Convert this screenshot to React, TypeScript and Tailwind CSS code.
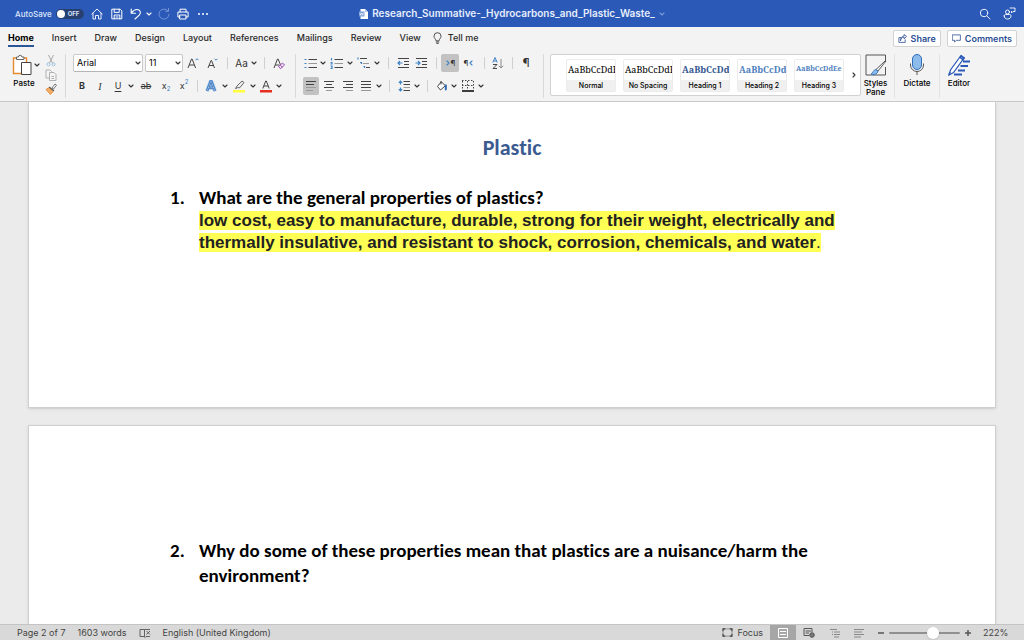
import type { ReactNode } from "react";

const stroke = { fill: "none", stroke: "currentColor", strokeLinecap: "round", strokeLinejoin: "round" } as const;

function Chevron({ className = "" }: { className?: string }) {
  return (
    <svg viewBox="0 0 6 6" className={`h-[6px] w-[6px] shrink-0 ${className}`} {...stroke} strokeWidth={1.1}>
      <path d="M1 2l2 2 2-2" />
    </svg>
  );
}

function Tool({ label, className = "", children }: { label: string; className?: string; children: ReactNode }) {
  return (
    <button type="button" aria-label={label} className={`flex h-[18px] shrink-0 items-center justify-center rounded-[2px] ${className}`}>
      {children}
    </button>
  );
}

function More({ label }: { label: string }) {
  return (
    <Tool label={label} className="w-2">
      <Chevron />
    </Tool>
  );
}

function Rule({ className }: { className: string }) {
  return (
    <span className={`flex shrink-0 justify-center ${className}`}>
      <span className="h-3 w-px bg-[#d0d0d0]" />
    </span>
  );
}

function Divider() {
  return <span className="h-11 w-px shrink-0 bg-[#d9d9d9]" />;
}

function Lines({ d, soft, blue, w = 14 }: { d: string; soft?: string; blue?: string; w?: number }) {
  return (
    <svg viewBox={`0 0 ${w} 12`} style={{ width: w }} className="h-3" fill="none" strokeWidth={1}>
      <path d={d} stroke="#444" />
      {soft && <path d={soft} stroke="#999" />}
      {blue && <path d={blue} stroke="#3f83c6" strokeWidth={1.2} />}
    </svg>
  );
}

function PickList({ label, value, className }: { label: string; value: string; className: string }) {
  return (
    <label className={`relative block h-[18px] shrink-0 ${className}`}>
      <span className="sr-only">{label}</span>
      <select className="block h-full w-full appearance-none rounded-[2px] border border-[#c9c9c9] border-b-[#b5b5b5] bg-white pl-[3px] text-[9px] text-black">
        <option>{value}</option>
      </select>
      <Chevron className="pointer-events-none absolute top-[6px] right-[2px]" />
    </label>
  );
}

const tabs = ["Home", "Insert", "Draw", "Design", "Layout", "References", "Mailings", "Review", "View"];

const styles = [
  { name: "Normal", look: "text-[9px] text-black" },
  { name: "No Spacing", look: "text-[9px] text-black" },
  { name: "Heading 1", look: "text-[9px] font-bold text-[#34588f]" },
  { name: "Heading 2", look: "text-[9px] font-bold text-[#4f81bd]" },
  { name: "Heading 3", look: "text-[7px] font-bold text-[#4f81bd]" },
];

function TitleBar() {
  return (
    <header className="grid h-[27px] shrink-0 grid-cols-[1fr_auto_1fr] items-center bg-[#2b59b8] text-white">
      <div className="flex items-center pl-[15px]">
        <label className="flex items-center gap-1 text-[8px] font-medium text-[#dce6fa]">
          AutoSave
          <input type="checkbox" role="switch" className="peer sr-only" />
          <span className="flex h-[10px] w-7 items-center gap-[3px] rounded-full bg-[#27406f] pl-px">
            <span className="h-2 w-2 rounded-full bg-white" />
            <span className="text-[6px] font-bold">OFF</span>
          </span>
        </label>
        <Tool label="Home" className="ml-[6px] w-[14px]">
          <svg viewBox="0 0 12 12" className="h-3 w-3" {...stroke} strokeWidth={0.9}>
            <path d="M.8 6L6 1l5.2 5M2 5.2V11h2.500V7.500h3V11H10V5.2" />
          </svg>
        </Tool>
        <Tool label="Save" className="ml-[6px] w-[14px]">
          <svg viewBox="0 0 12 12" className="h-3 w-3" {...stroke} strokeWidth={1}>
            <path d="M1.200 1.200h8l1.600 1.600v8H1.200zM3.200 1.200v3.200h5V1.200M3.200 10.800V7h5.600v3.800M5 9h2" />
          </svg>
        </Tool>
        <Tool label="Undo" className="ml-[5px] w-[14px]">
          <svg viewBox="0 0 12 12" className="h-3 w-3" {...stroke} strokeWidth={1.1}>
            <path d="M1.200 1v4.200h4.300M1.400 5C3.400 2.300 6 1 8.400 1.800c2.400.9 2.500 3.700.8 5.300L5 11" />
          </svg>
        </Tool>
        <Tool label="Undo history" className="ml-[2px] w-2">
          <Chevron />
        </Tool>
        <Tool label="Redo" className="ml-1 w-[14px] text-[#7d9bd8]">
          <svg viewBox="0 0 12 12" className="h-3 w-3" {...stroke} strokeWidth={0.9}>
            <path d="M9.500 2.500A5 5 0 1 0 11 6.500M10.500.5v2.800H7.700" />
          </svg>
        </Tool>
        <Tool label="Print" className="ml-[5px] w-[14px]">
          <svg viewBox="0 0 12 12" className="h-3 w-3" {...stroke} strokeWidth={1}>
            <path d="M3 4V1.200h6V4M3 9H.9V4h10.200v5H9M3 7h6v4H3z" />
          </svg>
        </Tool>
        <Tool label="More commands" className="ml-[6px] w-[14px]">
          <svg viewBox="0 0 12 4" className="h-1 w-3" fill="currentColor">
            <circle cx="2" cy="2" r="1" />
            <circle cx="6" cy="2" r="1" />
            <circle cx="10" cy="2" r="1" />
          </svg>
        </Tool>
      </div>
      <div className="flex items-center gap-1">
        <svg viewBox="0 0 9 10" className="h-[10px] w-[9px]">
          <path d="M1.500 0H6l3 3v7H1.500z" fill="#fff" />
          <path d="M6 0v3h3" fill="#b9caea" />
          <path d="M0 2.500h5.500v5H0z" fill="#7f9fda" />
          <path d="M1 3.800l.7 2.500 1-2.300 1 2.300.8-2.500M6.500 5H8M6.500 6.500H8" fill="none" stroke="#fff" strokeWidth=".6" />
        </svg>
        <h1 className="text-[10px] font-semibold text-[#e6edfb]">Research_Summative-_Hydrocarbons_and_Plastic_Waste_</h1>
        <Chevron className="text-[#7d9bd8]" />
      </div>
      <div className="flex items-center justify-end gap-[10px] pr-2">
        <Tool label="Search" className="w-[14px]">
          <svg viewBox="0 0 12 12" className="h-3 w-3" {...stroke} strokeWidth={0.9}>
            <circle cx="5" cy="5" r="3.700" />
            <path d="M7.800 7.800L11 11" />
          </svg>
        </Tool>
        <Tool label="Account" className="w-[14px]">
          <svg viewBox="0 0 13 13" className="h-[13px] w-[13px]" {...stroke} strokeWidth={0.9}>
            <circle cx="4.500" cy="5" r="2" />
            <path d="M1.200 9c0-1 .8-1.500 1.800-1.500h3.500c1 0 1.500.6 1.500 1.500 0 2-1.500 3-3.400 3S1.200 11 1.200 9zM7 1h5v3.500h-2L8.500 6V4.500" />
          </svg>
        </Tool>
      </div>
    </header>
  );
}

function TabRow() {
  return (
    <div className="flex h-[21px] shrink-0 items-center justify-between pr-[7px] pl-2">
      <nav className="flex h-full items-center gap-[18px] text-[9px] font-medium text-[#2a2a2a]">
        {tabs.map((t) => (
          <a key={t} href={`#${t.toLowerCase()}`} className={t === "Home" ? "flex h-[19px] items-center border-b-2 border-[#2b579a] pt-[2px] font-bold text-black" : ""}>
            {t}
          </a>
        ))}
        <button type="button" className="-ml-[6px] flex items-center gap-[6px]">
          <svg viewBox="0 0 9 12" className="h-3 w-[9px]" {...stroke} strokeWidth={0.8}>
            <path d="M3 8.500C3 7 1 6.500 1 4.200a3.500 3.500 0 0 1 7 0C8 6.500 6 7 6 8.500zM3.200 10h2.600M3.700 11.400h1.600" />
          </svg>
          Tell me
        </button>
      </nav>
      <div className="flex gap-[6px] pt-[2px] text-[9px] font-semibold text-[#2b4f94]">
        <button type="button" className="flex h-[17px] items-center gap-1 rounded-[2px] border border-[#d2d2d2] bg-white px-1">
          <svg viewBox="0 0 10 10" className="h-[9px] w-[9px]" {...stroke} strokeWidth={0.9}>
            <path d="M3 4H1v5.300h7V6.500M2.800 7c.3-2.300 1.700-3.500 4-3.500V5.300L9.500 2.700 6.800.6v1.600C4.500 2.300 2.900 4 2.800 7z" />
          </svg>
          Share
        </button>
        <button type="button" className="flex h-[17px] items-center gap-1 rounded-[2px] border border-[#d2d2d2] bg-white px-1">
          <svg viewBox="0 0 10 10" className="h-[9px] w-[9px]" {...stroke} strokeWidth={0.9}>
            <path d="M.7 1h8.600v6H4.800L2.800 9V7H.7z" />
          </svg>
          Comments
        </button>
      </div>
    </div>
  );
}

function FontGroup() {
  return (
    <div className="flex shrink-0 flex-col gap-[5px]">
      <div className="flex items-center">
        <PickList label="Font" value="Arial" className="mr-[2px] w-[70px]" />
        <PickList label="Font size" value="11" className="w-[38px]" />
        <Tool label="Grow font" className="w-5">
          <svg viewBox="0 0 12 12" className="h-3 w-3" fill="none" stroke="#444">
            <path d="M1 11L4.500 2h.6l3.500 9M2.300 8h5" />
            <path d="M8.500 3.200L10 1.700l1.500 1.500" stroke="#3f83c6" />
          </svg>
        </Tool>
        <Tool label="Shrink font" className="w-[18px]">
          <svg viewBox="0 0 12 12" className="h-3 w-3" fill="none" stroke="#444">
            <path d="M2 11l3-7.500h.5l3 7.500M3 8.500h4.500" />
            <path d="M8.500 1.700L10 3.200l1.500-1.500" stroke="#3f83c6" />
          </svg>
        </Tool>
        <Rule className="w-3" />
        <Tool label="Change case" className="w-[17px] text-[10px]">Aa</Tool>
        <More label="Case options" />
        <Rule className="w-3" />
        <Tool label="Clear formatting" className="w-[18px]">
          <svg viewBox="0 0 14 13" className="h-[13px] w-[14px]" fill="none" stroke="#444">
            <path d="M2 11L5.500 2h.6l2.500 6M3.300 8h4" />
            <path d="M6.500 9.500l4-3.500 2 2-4 3.700z" stroke="#9b4fb0" fill="#f3e3f7" />
            <path d="M8.200 8l2.200 2.200" stroke="#9b4fb0" />
          </svg>
        </Tool>
      </div>
      <div className="flex items-center text-[9px]">
        <Tool label="Bold" className="w-[18px] font-bold">B</Tool>
        <Tool label="Italic" className="w-[18px] font-['Liberation_Serif',serif] text-[10px] italic">I</Tool>
        <Tool label="Underline" className="w-[18px] underline underline-offset-2">U</Tool>
        <More label="Underline options" />
        <Tool label="Strikethrough" className="w-[22px] line-through">ab</Tool>
        <Tool label="Subscript" className="w-[18px]">
          x<sub className="bottom-[-3px] text-[6px] text-[#3f83c6]">2</sub>
        </Tool>
        <Tool label="Superscript" className="w-[18px]">
          x<sup className="top-[-4px] text-[6px] text-[#3f83c6]">2</sup>
        </Tool>
        <Rule className="w-2" />
        <Tool label="Text effects" className="w-5">
          <svg viewBox="0 0 12 12" className="h-3 w-3" fill="none">
            <path d="M2 11L5.600 1.500h.8L10 11M3.500 7.800h5" stroke="#8dbbea" strokeWidth="3.600" />
            <path d="M2 11L5.600 1.500h.8L10 11M3.500 7.800h5" stroke="#1f5fae" strokeWidth="2" />
            <path d="M2 11L5.600 1.500h.8L10 11M3.500 7.800h5" stroke="#e8f2fc" strokeWidth=".6" />
          </svg>
        </Tool>
        <More label="Effect options" />
        <Tool label="Highlight" className="w-5">
          <svg viewBox="0 0 12 13" className="h-[13px] w-3">
            <path d="M4 6L9 1l2 1.500-4.200 5.200H4.500L2.500 8.600z" fill="#eee" stroke="#555" strokeWidth=".9" />
            <path d="M0 10h12v2.500H0z" fill="#ffff3c" />
          </svg>
        </Tool>
        <More label="Highlight colours" />
        <Tool label="Font colour" className="w-[18px]">
          <svg viewBox="0 0 12 13" className="h-[13px] w-3">
            <path d="M2.800 8.500L5.700 1h.6l2.900 7.500M3.800 6h4.400" fill="none" stroke="#444" />
            <path d="M0 10h12v2.500H0z" fill="#e5301f" />
          </svg>
        </Tool>
        <More label="Font colours" />
      </div>
    </div>
  );
}

function ParagraphGroup() {
  return (
    <div className="flex shrink-0 flex-col gap-[5px]">
      <div className="flex items-center">
        <Tool label="Bullets" className="w-4">
          <Lines d="M4.500 2.500H13M4.500 10.500H13" soft="M4.500 6.500H13" blue="M.5 2.500h2M.5 6.500h2M.5 10.500h2" />
        </Tool>
        <More label="Bullet styles" />
        <Tool label="Numbering" className="w-[19px]">
          <Lines d="M4.500 2.500H13M4.500 10.500H13" soft="M4.500 6.500H13" blue="M1.500 1v2.500M.5 5.500h1.500v1.500H.5M.5 9h1.500v2.500H.5" />
        </Tool>
        <More label="Number styles" />
        <Tool label="Multilevel list" className="w-[19px]">
          <Lines d="M3 1.500H10M9 10.500H13" soft="M6 6.500H12" blue="M1 .5v2M3 5.500h1.500v1.500M6.500 9.500h1v1.500" />
        </Tool>
        <More label="List styles" />
        <Rule className="w-[14px]" />
        <Tool label="Decrease indent" className="w-4">
          <Lines w={12} d="M1 1.500H12M7 4.500H12M7 7.500H12M1 10.500H12" blue="M5.500 6H1M3 4L1 6l2 2" />
        </Tool>
        <Tool label="Increase indent" className="w-5">
          <Lines w={12} d="M1 1.500H12M7 4.500H12M7 7.500H12M1 10.500H12" blue="M.5 6H5M3 4l2 2-2 2" />
        </Tool>
        <Rule className="w-[10px]" />
        <Tool label="Left to right" className="w-[18px] bg-[#c2c2c2] text-[8px]">
          <Chevron className="-rotate-90 text-[#3f83c6]" />¶
        </Tool>
        <Tool label="Right to left" className="w-5 text-[8px]">
          ¶<Chevron className="rotate-90 text-[#3f83c6]" />
        </Tool>
        <Rule className="w-[10px]" />
        <Tool label="Sort" className="w-[18px]">
          <svg viewBox="0 0 12 12" className="h-3 w-3" fill="none" stroke="#444">
            <path d="M.8 5.500L3 .5l2.200 5M1.500 4h3" stroke="#3f83c6" />
            <path d="M1 7.500h4L1 11.500h4" />
            <path d="M9 2v9M6.800 8.800L9 11l2.200-2.200" stroke="#888" />
          </svg>
        </Tool>
        <Rule className="w-[10px]" />
        <Tool label="Show marks" className="w-[18px] text-[12px]">¶</Tool>
      </div>
      <div className="flex items-center">
        <Tool label="Align left" className="w-4 bg-[#c2c2c2]">
          <Lines w={12} d="M1 1.500H11M1 4.500H9" soft="M1 7.500H11M1 10.500H8" />
        </Tool>
        <Tool label="Centre" className="w-5">
          <Lines w={12} d="M1 1.500H11M3 4.500H9M1 7.500H11" soft="M3 10.500H9" />
        </Tool>
        <Tool label="Align right" className="w-[18px]">
          <Lines w={12} d="M1 1.500H11M4 4.500H11M1 7.500H11" soft="M4 10.500H11" />
        </Tool>
        <Tool label="Justify" className="w-[18px]">
          <Lines w={12} d="M1 1.500H11M1 4.500H11M1 7.500H11" soft="M1 10.500H11" />
        </Tool>
        <More label="Justify options" />
        <Rule className="w-3" />
        <Tool label="Line spacing" className="w-[18px]">
          <Lines w={13} d="M5.500 1.500H12M5.500 4.500H12M5.500 10.500H12" soft="M5.500 7.500H12" blue="M2.500 1v3.500M2.500 7.500V11M.8 2.800L2.500 1l1.700 1.800M.8 9.200L2.500 11l1.700-1.800" />
        </Tool>
        <More label="Spacing options" />
        <Rule className="w-3" />
        <Tool label="Shading" className="w-[17px]">
          <svg viewBox="0 0 12 12" className="h-3 w-3" {...stroke}>
            <path d="M5 2L1.500 6.500l3 3.500L9 6z" stroke="#444" fill="#fff" />
            <path d="M5 4V1.500M10 5v4" stroke="#444" />
            <path d="M9.700 5.500v4" stroke="#2f6fc0" strokeWidth="1.800" />
          </svg>
        </Tool>
        <More label="Shading colours" />
        <Tool label="Borders" className="w-[19px]">
          <svg viewBox="0 0 12 12" className="h-3 w-3" fill="none" stroke="#444">
            <path d="M0 .5h12M0 5.500h12M.5 1v9M5.500 1v9M11.500 1v9" strokeDasharray="1.500 1.500" />
            <path d="M0 11h12" stroke="#000" strokeWidth="1.500" />
          </svg>
        </Tool>
        <More label="Border styles" />
      </div>
    </div>
  );
}

function StyleGallery() {
  return (
    <div className="flex h-[42px] min-w-0 shrink-0 items-center rounded-[2px] border border-[#d2d2d2] bg-white pl-[15px]">
      <div className="flex gap-[7px]">
        {styles.map((s) => (
          <button key={s.name} type="button" className="flex h-[33px] w-[50px] flex-col rounded-[2px] border border-[#ececec] bg-white">
            <span className={`flex w-full flex-1 items-center overflow-hidden pl-px font-['Noto_Serif','DejaVu_Serif','Liberation_Serif',serif] whitespace-nowrap ${s.look}`}>AaBbCcDdEe</span>
            <span className="w-full bg-[#f0f0f0] text-center text-[7px] leading-[11px] font-medium text-black">{s.name}</span>
          </button>
        ))}
      </div>
      <Tool label="More styles" className="ml-1 w-3">
        <Chevron className="-rotate-90" />
      </Tool>
    </div>
  );
}

function BigTool({ icon, children, className }: { icon: ReactNode; children: ReactNode; className: string }) {
  return (
    <button type="button" className={`flex h-11 shrink-0 flex-col items-center gap-[3px] text-center text-[8px] leading-[9px] font-medium text-black ${className}`}>
      {icon}
      <span>{children}</span>
    </button>
  );
}

function Ribbon() {
  return (
    <div className="flex h-[54px] shrink-0 items-start border-b border-[#c8c8c8] pt-[6px] text-[#333]">
      <div className="flex w-[65px] shrink-0 pl-2">
        <BigTool
          className="w-8"
          icon={
            <svg viewBox="0 0 22 22" className="mr-1 h-[22px] w-[22px]" fill="none">
              <path d="M2.500 4h13v15.500h-13z" fill="#fff" stroke="#e58a2e" strokeWidth="1.400" />
              <path d="M5.500 5.500V3h2a1.700 1.700 0 0 1 3.400 0h2v2.500z" fill="#fff" stroke="#666" />
              <path d="M10.500 8.500h9.500v12h-9.500z" fill="#fff" stroke="#444" />
            </svg>
          }
        >
          Paste
        </BigTool>
        <div className="-ml-[7px] pt-[2px]">
          <More label="Paste options" />
        </div>
        <div className="ml-1 flex flex-col gap-[2px]">
          <button type="button" aria-label="Cut">
            <svg viewBox="0 0 12 13" className="h-[13px] w-3" fill="none">
              <path d="M3.500 1l4 8M8.500 1l-4 8" stroke="#a8a8a8" />
              <circle cx="3.500" cy="10.300" r="1.500" stroke="#9bbfe0" />
              <circle cx="8.500" cy="10.300" r="1.500" stroke="#9bbfe0" />
            </svg>
          </button>
          <button type="button" aria-label="Copy">
            <svg viewBox="0 0 12 12" className="h-3 w-3" fill="#f5f5f5" stroke="#b0b0b0">
              <path d="M1 1h4l1.500 1.500V9H1z" />
              <path d="M4.500 3.500H9l2 2v6H4.500zM6.500 7.500H9M6.500 9.500H9" />
            </svg>
          </button>
          <button type="button" aria-label="Format painter">
            <svg viewBox="0 0 12 12" className="h-3 w-3">
              <path d="M7 5l3-4 1.500 1.200L8.500 6z" fill="#fff" stroke="#555" strokeWidth=".8" />
              <path d="M4 4l5 4" stroke="#555" strokeWidth="1.400" />
              <path d="M3.500 5L1 6.500l4.500 5L8 8.500z" fill="#f6b26b" stroke="#e07b20" strokeWidth=".8" />
            </svg>
          </button>
        </div>
      </div>
      <Divider />
      <div className="w-[229px] shrink-0 pl-[7px]">
        <FontGroup />
      </div>
      <Divider />
      <div className="w-[247px] shrink-0 pl-[7px]">
        <ParagraphGroup />
      </div>
      <Divider />
      <div className="flex min-w-0 pl-[6px]">
        <StyleGallery />
        <BigTool
          className="w-[29px]"
          icon={
            <svg viewBox="0 0 22 22" className="h-[22px] w-[22px]" fill="none">
              <path d="M20.500 8V1H1v20h19.500v-8" stroke="#555" />
              <path d="M21 7L13 17l-2-1.500L20 7z" fill="#fff" stroke="#444" strokeWidth=".9" />
              <path d="M11 15.500c-3 .3-2.500 3.500-5 4.500 2 1 6.500.8 7-3z" fill="#8dbbea" stroke="#2f6fc0" strokeWidth=".9" />
            </svg>
          }
        >
          Styles Pane
        </BigTool>
        <span className="ml-1 h-11 w-px bg-[#e2e2e2]" />
        <BigTool
          className="w-11"
          icon={
            <svg viewBox="0 0 16 22" className="h-[22px] w-4" fill="none">
              <rect x="3.500" y=".5" width="9" height="15" rx="4.500" fill="#8dbbea" stroke="#2f6fc0" />
              <path d="M1.500 9.500v1.500a6.500 6.500 0 0 0 13 0V9.500M8 17.500V21" stroke="#555" />
            </svg>
          }
        >
          Dictate
        </BigTool>
        <span className="h-11 w-px bg-[#e2e2e2]" />
        <BigTool
          className="w-[38px]"
          icon={
            <svg viewBox="0 0 22 22" className="h-[22px] w-[22px]" fill="none">
              <path d="M15 7.500h7M12.500 12h7.500M10 16.500h7M6 20.500h8" stroke="#2b59b8" strokeWidth="2.200" />
              <path d="M1 21l1.500-5L13 1.500l3.200 2.300L5.500 18.500z" fill="#fff" stroke="#2b59b8" strokeWidth="1.200" />
              <path d="M12 3.500l3 2.200 1-1.600-2.600-2zM1 21l1-3" stroke="#2b59b8" strokeWidth="1.500" />
            </svg>
          }
        >
          Editor
        </BigTool>
      </div>
    </div>
  );
}

function Document() {
  return (
    <main className="min-h-0 flex-1 overflow-hidden bg-[#ebebeb] px-7 font-['Carlito','Lato',sans-serif] text-[19px] leading-[25px] font-bold text-black [font-variant-ligatures:none]">
      <article className="border-x border-b border-[#cfcfcf] bg-white px-[141px] pt-8 pb-[153px] shadow-sm">
        <h2 className="text-center text-[22px] leading-[28px] text-[#3b5b91]">Plastic</h2>
        <ol className="pt-[23px]">
          <li className="flex">
            <span className="w-[29px] shrink-0">1.</span>
            <div className="whitespace-nowrap">
              <p>What are the general properties of plastics?</p>
              <p className="font-['Liberation_Sans',sans-serif] text-[17px] leading-[22px] text-[#222]">
                <mark className="bg-[#ffff54] text-inherit">
                  low cost, easy to manufacture, durable, strong for their weight, electrically and
                  <br />
                  thermally insulative, and resistant to shock, corrosion, chemicals, and water<span className="font-normal">.</span>
                </mark>
              </p>
            </div>
          </li>
        </ol>
      </article>
      <article className="mt-[17px] border border-[#cfcfcf] bg-white px-[141px] pt-28 pb-28 shadow-sm">
        <ol start={2}>
          <li className="flex">
            <span className="w-[29px] shrink-0">2.</span>
            <p>
              Why do some of these properties mean that plastics are a nuisance/harm the
              <br />
              environment?
            </p>
          </li>
        </ol>
      </article>
    </main>
  );
}

function StatusBar() {
  return (
    <footer className="flex h-4 shrink-0 items-center justify-between border-t border-[#c4c4c4] bg-[#d9d9d9] pr-[17px] pl-[17px] text-[9px] leading-[15px] text-[#444]">
      <div className="flex items-center gap-3">
        <span>Page 2 of 7</span>
        <span>1603 words</span>
        <button type="button" aria-label="Proofing">
          <svg viewBox="0 0 12 10" className="h-[10px] w-3" fill="none" stroke="#555" strokeWidth=".9">
            <path d="M5.500 1.500H1v7h4.500zM5.500 1.500H7M5.500 8.500L6 9.500 7 8.500M7.500 3l3.500 3.500M11 3L7.500 6.500M7 1.500h4M7 8.500h4" />
          </svg>
        </button>
        <button type="button">English (United Kingdom)</button>
      </div>
      <div className="flex h-full items-center">
        <button type="button" className="mr-[7px] flex items-center gap-1">
          <svg viewBox="0 0 12 10" className="h-[9px] w-[11px]" fill="none" stroke="#444">
            <path d="M1 3.500V1h2.500M8.500 1H11v2.500M11 6.500V9H8.500M3.500 9H1V6.500" strokeWidth="1.200" />
            <path d="M1 1h10v8H1z" strokeWidth=".5" />
          </svg>
          Focus
        </button>
        <button type="button" aria-label="Print layout" className="flex h-full w-[26px] items-center justify-center bg-[#a6a6a6]">
          <svg viewBox="0 0 10 10" className="h-[10px] w-[10px]" fill="none" stroke="#fff">
            <path d="M.5.5h9v9h-9zM2 3.500h6M2 6.500h6" />
          </svg>
        </button>
        <button type="button" aria-label="Web layout" className="flex w-[26px] justify-center">
          <svg viewBox="0 0 12 10" className="h-[10px] w-3" fill="none" stroke="#555">
            <path d="M6 7.500H1v-7h8V4M2.500 3H8M2.500 5H6" />
            <circle cx="9" cy="7" r="2.300" fill="#777" />
          </svg>
        </button>
        <button type="button" aria-label="Outline" className="flex w-[26px] justify-center">
          <svg viewBox="0 0 12 10" className="h-[10px] w-3" fill="none" stroke="#888">
            <path d="M1 1.500h7M3 4h1M5 4h6M3 6.500h1M5 6.500h6M5 9h5" />
          </svg>
        </button>
        <button type="button" aria-label="Draft" className="flex w-[22px] justify-center">
          <svg viewBox="0 0 12 10" className="h-[10px] w-3" fill="none" stroke="#888">
            <path d="M1 1.500h10M1 4h8M1 6.500h10M1 9h7" />
          </svg>
        </button>
        <button type="button" aria-label="Zoom out" className="ml-[7px] flex">
          <svg viewBox="0 0 8 8" className="h-2 w-2" stroke="#555" strokeWidth="1.500">
            <path d="M1 4h6" />
          </svg>
        </button>
        <input
          type="range"
          aria-label="Zoom"
          min={10}
          max={500}
          defaultValue={325}
          className="mx-1 h-3 w-[71px] appearance-none bg-transparent [&::-webkit-slider-runnable-track]:h-[2px] [&::-webkit-slider-runnable-track]:rounded-full [&::-webkit-slider-runnable-track]:bg-[#909090] [&::-webkit-slider-thumb]:-mt-[5px] [&::-webkit-slider-thumb]:h-3 [&::-webkit-slider-thumb]:w-3 [&::-webkit-slider-thumb]:appearance-none [&::-webkit-slider-thumb]:rounded-full [&::-webkit-slider-thumb]:bg-white [&::-webkit-slider-thumb]:shadow-sm"
        />
        <button type="button" aria-label="Zoom in" className="flex">
          <svg viewBox="0 0 8 8" className="h-2 w-2" stroke="#555" strokeWidth="1.500">
            <path d="M1 4h6M4 1v6" />
          </svg>
        </button>
        <span className="ml-[11px] w-6 text-right">222%</span>
      </div>
    </footer>
  );
}

export default function App() {
  return (
    <div className="flex h-screen flex-col overflow-hidden bg-[#f3f3f3] font-['Inter',sans-serif]">
      <TitleBar />
      <TabRow />
      <Ribbon />
      <Document />
      <StatusBar />
    </div>
  );
}
